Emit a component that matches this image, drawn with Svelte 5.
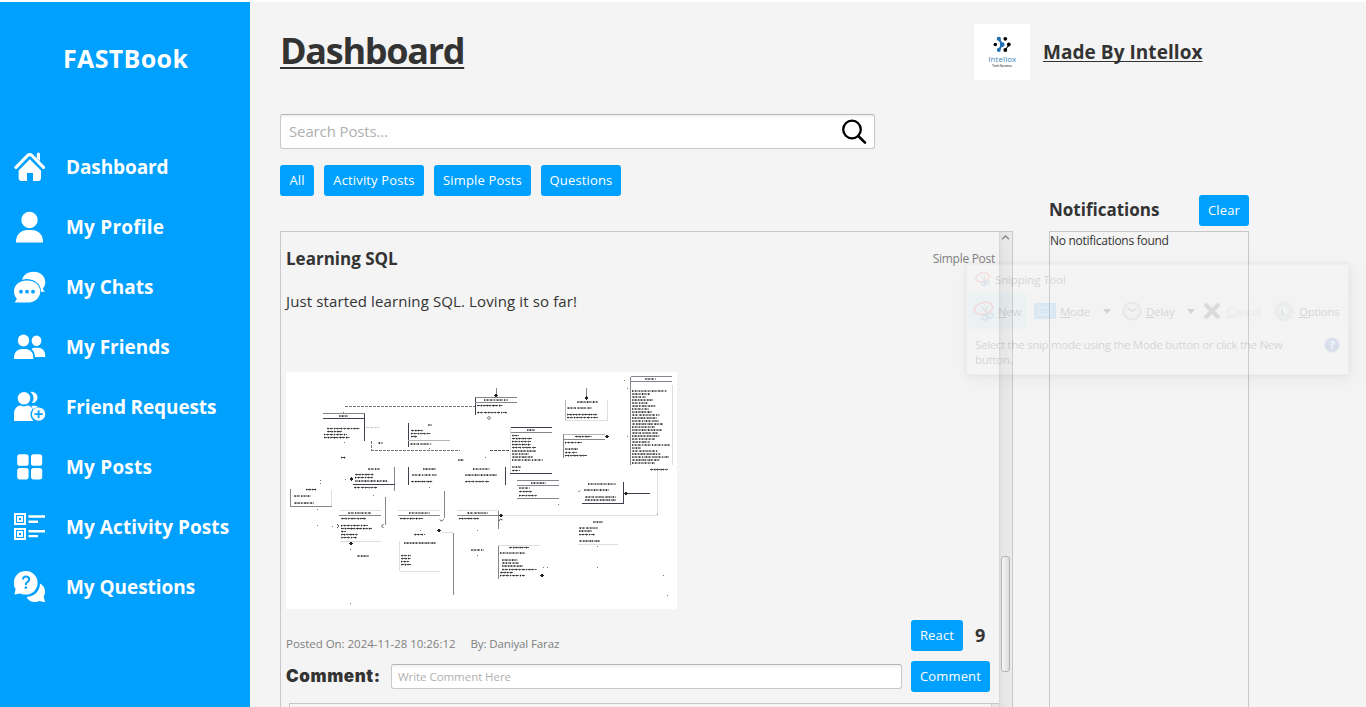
<script>
  const nav = [
    { label: 'Dashboard', icon: 'home', tracking: -0.1 },
    { label: 'My Profile', icon: 'user', tracking: 0.2 },
    { label: 'My Chats', icon: 'chat', tracking: 0 },
    { label: 'My Friends', icon: 'friends', tracking: 0 },
    { label: 'Friend Requests', icon: 'request', tracking: -0.13 },
    { label: 'My Posts', icon: 'grid', tracking: 0.2 },
    { label: 'My Activity Posts', icon: 'list', tracking: 0.07 },
    { label: 'My Questions', icon: 'question', tracking: -0.05 }
  ];

  const filters = [
    { label: 'All', width: 34 },
    { label: 'Activity Posts', width: 100 },
    { label: 'Simple Posts', width: 97 },
    { label: 'Questions', width: 80 }
  ];

  // Diagram strokes: [x1, y1, x2, y2, colour]
  const D = '#3d414e', M = '#85858f', L = '#dedede';
  const lines = [
    [323, 413.5, 365, 413.5, M], [323, 418.5, 365, 418.5, D], [364.5, 414, 364.5, 441, D],
    [408.5, 423, 408.5, 447, D], [408, 440.5, 450, 440.5, '#b5b5b5'],
    [394.5, 467, 394.5, 491, M], [353, 484.5, 395, 484.5, D],
    [408.5, 467, 408.5, 485, D], [505.5, 467, 505.5, 485, D],
    [290.5, 489, 290.5, 506, M], [290, 506.5, 332, 506.5, M], [331.5, 490, 331.5, 506, L],
    [475.5, 397, 475.5, 415, D], [475, 397.5, 517, 397.5, M], [475, 402.5, 517, 402.5, M], [496.5, 388, 496.5, 395, M],
    [510, 427.5, 552, 427.5, D], [510, 432.5, 552, 432.5, M], [510.5, 427, 510.5, 473, L], [510, 473.5, 552, 473.5, D],
    [517, 480.5, 559, 480.5, M], [517, 485.5, 559, 485.5, M], [517, 498.5, 559, 498.5, M],
    [586.5, 388, 586.5, 396, M], [565.5, 400, 565.5, 420, '#b5b5b5'], [607.5, 400, 607.5, 420, L], [565, 420.5, 608, 420.5, L],
    [563, 434.5, 605, 434.5, '#b5b5b5'], [563, 439.5, 605, 439.5, M], [563.5, 434, 563.5, 458, M],
    [631, 376.5, 672, 376.5, M], [631, 381.5, 672, 381.5, M], [630.5, 377, 630.5, 465, M], [672.5, 385, 672.5, 465, L],
    [657.5, 467, 657.5, 515, L], [503, 515.5, 657, 515.5, L],
    [623.5, 482, 623.5, 503, D], [582, 503.5, 624, 503.5, D], [627, 493.5, 650, 493.5, D],
    [385.5, 497, 385.5, 525, M], [444.5, 491, 444.5, 518, M],
    [340, 510.5, 381, 510.5, L], [339, 515.5, 381, 515.5, M], [340, 541.5, 381, 541.5, L],
    [398, 510.5, 440, 510.5, L], [398, 515.5, 440, 515.5, M],
    [457, 510.5, 499, 510.5, L], [457, 515.5, 499, 515.5, M], [498.5, 511, 498.5, 529, M],
    [442, 532.5, 453, 532.5, L], [453.5, 533, 453.5, 595, M],
    [399.5, 541, 399.5, 571, L], [400, 571.5, 440, 571.5, L],
    [498, 545.5, 540, 545.5, L], [498.5, 546, 498.5, 579, M],
    [578, 544.5, 618, 544.5, L]
  ];

  const dashed = [
    [345, 406.5, 475, 406.5, '#777'], [366, 427.5, 380, 427.5, '#ccc'],
    [371.5, 441, 371.5, 450, '#777'], [371, 450.5, 460, 450.5, '#777'], [490, 450.5, 510, 450.5, '#555']
  ];

  // Rows of small print: [x1, x2, y]
  const rows = [
    [339, 348, 416], [327, 360, 428.5], [327, 342, 431.5], [324, 347, 434.5], [324, 350, 437.5], [378, 383, 443],
    [341, 346, 457.5], [428, 432, 425], [411, 423, 430.5], [411, 431, 433.5], [411, 417, 436.5], [410, 432, 444],
    [458, 464, 460], [368, 380, 469], [355, 374, 474.5], [355, 373, 477.5], [355, 388, 481], [354, 378, 487.5],
    [423, 436, 469], [412, 437, 475], [411, 433, 481.5], [473, 490, 469], [465, 497, 475], [465, 489, 481.5],
    [306, 317, 489.5], [294, 311, 496], [294, 314, 503],
    [484, 508, 400], [477, 503, 405.5], [477, 507, 412.5],
    [527, 535, 430], [512, 519, 435.5], [512, 532, 438.5], [512, 531, 441.5], [512, 531, 444.5], [512, 536, 447.5],
    [512, 536, 451], [512, 529, 454], [512, 533, 457], [512, 543, 460], [512, 521, 467], [512, 520, 470.5],
    [531, 546, 483], [519, 530, 488], [519, 532, 491.5], [519, 537, 495.5],
    [577, 598, 402], [567, 592, 408], [567, 597, 414.5], [567, 598, 417.5],
    [575, 592, 436.5], [565, 582, 442.5], [565, 578, 449], [565, 577, 452.5], [565, 587, 455.5],
    [645, 656, 379], [650, 668, 469.5],
    [588, 616, 484], [584, 609, 490], [585, 616, 497], [585, 616, 500],
    [348, 372, 513], [341, 366, 518.5], [341, 368, 525.5], [341, 372, 528.5], [341, 346, 531.5], [341, 358, 534.5], [341, 357, 537.5],
    [357, 369, 556], [409, 430, 513], [400, 423, 518.5], [414, 425, 534.5], [404, 436, 543],
    [401, 411, 555.5], [401, 411, 558.5], [401, 409, 561.5], [401, 411, 564.5],
    [467, 488, 513], [459, 479, 518.5], [471, 484, 550],
    [509, 529, 547.5], [500, 525, 553], [502, 518, 560], [502, 519, 563], [502, 523, 566], [502, 537, 569.5], [500, 513, 572.5], [500, 525, 575.5],
    [593, 603, 522], [579, 598, 528], [579, 592, 531], [579, 595, 534.5], [579, 600, 541]
  ];
  const longBox = [667, 650, 646, 654, 648, 656, 649, 652, 660, 657, 659, 663, 656, 662, 658, 660, 655, 650, 670, 641, 658, 661, 669, 660, 655];
  longBox.forEach((x, i) => rows.push([632, x, 391 + i * 3]));

  const dashes = ['3 .6 2 .5 4 .8', '2 .5 3.4 .9 1.4 .4', '4 .6 1.5 .7 2.2 .5', '1.6 .6 2.8 .4 3.5 1'];
  const diamonds = [[496, 395.5], [586.5, 398], [606.5, 436.5], [625.5, 493.5], [350.5, 543.5], [438.5, 530.5], [500.5, 515.5], [542.3, 575.5], [351.5, 479]];
  const dots = [[343, 412], [344, 442], [429, 448], [320, 480], [320, 483], [345, 479], [317, 509], [317, 525], [332, 526], [350, 549], [373, 495], [429, 487], [477, 530], [477, 555], [624, 380], [627, 388], [627, 436], [657, 514], [543, 567], [547, 567], [597, 567], [597, 546], [663, 575], [667, 595], [350, 603], [558, 504], [485, 457], [420, 530]];
</script>

<div class="window">
  <aside>
    <div class="brand">FASTBook</div>
    <nav>
      {#each nav as item}
        <a class="item" href="#{item.icon}">
          <svg width="32" height="32" viewBox="0 0 32 32" fill="#fff">
            {#if item.icon === 'home'}
              <path d="M2 16.3 13.6 4.5a3 3 0 0 1 4.3 0L29.5 16.3" fill="none" stroke="#fff" stroke-width="3.2" stroke-linecap="round" />
              <path d="M22.800 3.200a1.600 1.600 0 0 1 3.200 0V10L22.800 7z" />
              <path d="M15.8 8.3 27 19.6V27a3 3 0 0 1-3 3h-5v-8h-6v8H7.600a3 3 0 0 1-3-3v-7.400z" />
            {:else if item.icon === 'user'}
              <circle cx="15.500" cy="9" r="8.200" />
              <path d="M2 31.500v-2.500A11 10.500 0 0 1 13 19h5a11 10.500 0 0 1 11 10v2.500z" />
            {:else if item.icon === 'chat'}
              <path d="M8 8.800C9.500 3.500 14 .700 19.500.700 26.500.700 31.300 5 31.300 11c0 3.200-1.300 5.400-2.700 6.700l2.300 3h-4.100A14 11.500 0 0 0 8 8.800z" />
              <path fill-rule="evenodd" d="M13 9.600c7.600 0 13.200 4.400 13.200 10.800S21 31.500 13.500 31.500H.700l2.200-3.700C1.200 26 0 23.500 0 20.500 0 14 5.600 9.600 13 9.600zM7 18.800a1.900 1.900 0 1 0 0 3.800 1.900 1.900 0 0 0 0-3.800zm6 0a1.900 1.900 0 1 0 0 3.800 1.900 1.900 0 0 0 0-3.800zm6 0a1.900 1.900 0 1 0 0 3.800 1.900 1.900 0 0 0 0-3.800z" />
            {:else if item.icon === 'friends'}
              <ellipse cx="9.500" cy="9.600" rx="5.700" ry="6" />
              <ellipse cx="22.500" cy="9.700" rx="4.900" ry="5.200" />
              <path d="M0 28v-1.500C0 21.500 3.500 18 8 18h3.500c4.500 0 7.800 3.500 7.800 8.500V28z" />
              <path d="M17.500 18c1-.7 2.300-1.200 3.700-1.200h3c4 0 7 3.200 7 7.200v2H21c0-3.200-1.300-6.300-3.500-8z" />
            {:else if item.icon === 'request'}
              <circle cx="10" cy="7.200" r="6.300" />
              <path d="M16.500.900c4-.4 7 2.300 7 5.600 0 3.200-2.600 5.600-5.800 5.600 1.200-1.400 1.800-3 1.800-5 0-2.500-1.200-4.700-3-6.200z" />
              <path d="M17.500 14.800h2.800c1.600 0 2.900.5 4 1.400-2.400.2-4.200 1.200-5.400 2.400z" />
              <path d="M0 30v-7c0-4.700 2.800-8.400 6.500-8.400 1 .5 2.100.8 3.500.8s2.600-.3 3.500-.8c2.300 0 3.900 1.400 5 3.400a8.600 8.600 0 0 0 1 12z" />
              <path fill-rule="evenodd" d="M24.600 16.400a6.700 6.700 0 1 1 0 13.400 6.700 6.700 0 0 1 0-13.400zm-.9 2.800v3h-3.200v1.800h3.200v3.200h1.800v-3.200h3.200v-1.800h-3.200v-3z" />
            {:else if item.icon === 'grid'}
              <rect x="3.200" y="3.200" width="11.400" height="11.600" rx="2.600" />
              <rect x="17" y="3.200" width="11.200" height="11.600" rx="2.600" />
              <rect x="3.200" y="17" width="11.400" height="11.400" rx="2.600" />
              <rect x="17" y="17" width="11.200" height="11.400" rx="2.600" />
            {:else if item.icon === 'list'}
              <path fill-rule="evenodd" d="M0 2h12v12H0zM2 4v8h8V4zM0 17h12v12H0zM2 19v8h8v-8z" />
              <path fill-rule="evenodd" d="M3 5h6v6H3zM5 7v2h2V7zM3 20h6v6H3zM5 22v2h2v-2z" />
              <path d="M14.500 4.300H31v2.400H14.500zM14.500 9.600H24V12h-9.500zM14.500 19H31v2.400H14.500zM14.500 24H24v2.200h-9.500z" />
            {:else}
              <path fill-rule="evenodd" d="M11.800 0a11.800 11.800 0 0 1 0 23.600c-2 0-3.800-.4-5.400-1.200L.500 23.500l1.100-5.400A11.800 11.800 0 0 1 11.800 0zM8 8.500h2c.1-1.300.9-2 2-2s2 .7 2 1.700c0 1.200-.8 1.700-1.700 2.500-1 .8-1.500 1.700-1.500 3.300h2c0-1 .3-1.500 1.300-2.300 1.200-1 2-1.800 2-3.500 0-2.200-1.700-3.600-4-3.600S8 6 8 8.500zm2.700 7v2.300H13v-2.300z" />
              <path d="M26 12.500c3 1.500 5 4.500 5 8.200 0 1.900-.5 3.400-1.300 4.800l1.300 5.700-5.600-1.200c-1.500.8-3 1.100-4.700 1.100-3.700 0-6.700-1.900-8.100-5.200C20.500 25.600 26 20 26 12.500z" />
            {/if}
          </svg>
          <span style:letter-spacing="{item.tracking}px">{item.label}</span>
        </a>
      {/each}
    </nav>
  </aside>

  <main>
    <header>
      <h1><span>Dashboard</span></h1>
      <div class="maker">
        <svg class="logo" width="56" height="56" viewBox="0 0 56 56">
          <rect width="56" height="56" fill="#fff" />
          <g stroke="#1f6fb5" fill="#1f6fb5" stroke-width="1.300">
            <path d="M25 15l3 5.500L25 26" fill="none" stroke-width="2" />
            <circle cx="24.800" cy="14.800" r="1.500" /><circle cx="28.300" cy="20.600" r="1.700" /><circle cx="24.800" cy="26" r="1.300" />
          </g>
          <path d="M31 26l4-5" stroke="#000" stroke-width="1.200" />
          <circle cx="31.300" cy="14.800" r="1.900" /><circle cx="34.800" cy="20.500" r="1.900" /><circle cx="31.300" cy="26" r="1.900" /><circle cx="21.300" cy="20.500" r="1.800" />
          <text x="14.300" y="38.200" font-size="8" textLength="28" fill="#4285bd">Intellox</text>
          <text x="18" y="43.400" font-size="3.800" textLength="20" fill="#222">Tech Services</text>
        </svg>
        <h2>Made By Intellox</h2>
      </div>
    </header>

    <div class="columns">
      <section class="posts">
        <div class="search">
          <span>Search Posts...</span>
          <svg width="26" height="26" viewBox="0 0 26 26" fill="none" stroke="#000">
            <circle cx="11" cy="10.500" r="8.800" stroke-width="2.300" />
            <path d="M17.300 17 24 23.700" stroke-width="2.600" stroke-linecap="round" />
          </svg>
        </div>
        <div class="filters">
          {#each filters as f}
            <button style:width="{f.width}px">{f.label}</button>
          {/each}
        </div>

        <div class="feed">
          <article>
            <div class="post-head"><h3>Learning SQL</h3><span class="kind">Simple Post</span></div>
            <p>Just started learning SQL. Loving it so far!</p>
            <svg class="diagram" width="391" height="237" viewBox="286 372 391 237" shape-rendering="crispEdges" fill="none">
              <rect x="286" y="372" width="391" height="237" fill="#fff" />
              {#each lines as [x1, y1, x2, y2, c]}
                <line {x1} {y1} {x2} {y2} stroke={c} />
              {/each}
              {#each dashed as [x1, y1, x2, y2, c]}
                <line {x1} {y1} {x2} {y2} stroke={c} stroke-dasharray="3 1" />
              {/each}
              <g stroke="#222" shape-rendering="auto">
                {#each rows as [x1, x2, y], i}
                  <line {x1} y1={y} {x2} y2={y} stroke-width=".8" stroke-dasharray={dashes[i % 4]} />
                  <line x1={x1 + (i % 3) * 0.6} y1={y + 0.2} x2={x2 - 1} y2={y + 0.2} stroke-width="1.700" stroke-dasharray={i % 2 ? '.8 2.300 .6 3' : '.6 2.600 1 1.900'} />
                {/each}
              </g>
              <g fill="#222">
                {#each diamonds as [x, y]}
                  <path d="M{x - 2} {y}l2-2 2 2-2 2z" />
                {/each}
                {#each dots as [x, y]}
                  <rect {x} {y} width="1" height="1" fill="#777" />
                {/each}
              </g>
              <g stroke="#555" shape-rendering="auto">
                <path d="M337 524l1.800 2-1.800 2M383.500 524l-2 2 2 2M440 519.500l1.500 1.800 2-2M578.500 492l1.500-1.500M499 521l1.500-2 2 1" />
                <circle cx="489" cy="418" r="1.400" stroke-width=".7" />
              </g>
            </svg>
            <div class="post-foot">
              <div class="meta"><span class="date">Posted On: 2024-11-28 10:26:12</span><span class="author">By: Daniyal Faraz</span></div>
              <button class="react">React</button>
              <strong>9</strong>
            </div>
            <div class="comment">
              <span class="label">Comment:</span>
              <div class="field">Write Comment Here</div>
              <button>Comment</button>
            </div>
            <div class="replies"><i></i></div>
          </article>
          <div class="scrollbar">
            <svg width="9" height="5" viewBox="0 0 9 5"><path d="M1 4.300 4.500 1 8 4.300" fill="none" stroke="#888" stroke-width="1.300" /></svg>
            <div class="thumb"></div>
          </div>
        </div>
      </section>

      <section class="notifications">
        <div class="note-head"><h3>Notifications</h3><button>Clear</button></div>
        <div class="note-list">No notifications found</div>
      </section>
    </div>
  </main>

  <div class="snip">
    <div class="snip-title">
      <svg width="17" height="15" viewBox="0 0 22 20" fill="none"><ellipse cx="11" cy="7" rx="9" ry="5.500" stroke="#e33" stroke-width="1.600" transform="rotate(-15 11 7)" /><path d="M9 5l6 8M14 5l-1 9" stroke="#777" stroke-width="1.500" /><circle cx="12" cy="16" r="2.300" stroke="#27b" stroke-width="1.600" /><circle cx="17.500" cy="14" r="2.300" stroke="#27b" stroke-width="1.600" /></svg>
      <span>Snipping Tool</span>
    </div>
    <div class="snip-tools">
      <div class="new">
        <svg width="23" height="21" viewBox="0 0 22 20" fill="none"><ellipse cx="11" cy="7" rx="9" ry="5.500" stroke="#e33" stroke-width="1.600" transform="rotate(-15 11 7)" /><path d="M9 5l6 8M14 5l-1 9" stroke="#777" stroke-width="1.500" /><circle cx="12" cy="16" r="2.300" stroke="#27b" stroke-width="1.600" /><circle cx="17.500" cy="14" r="2.300" stroke="#27b" stroke-width="1.600" /></svg>
        <span><u>N</u>ew</span>
      </div>
      <svg class="mode" width="22" height="16" viewBox="0 0 22 16"><rect width="22" height="16" fill="#2a9df0" /><rect x="4.500" y="4.500" width="12" height="7" fill="none" stroke="#fff" stroke-dasharray="1 1" /></svg>
      <span class="t-mode"><u>M</u>ode</span>
      <svg class="caret" width="8" height="5" viewBox="0 0 8 5"><path d="M0 0h8L4 5z" fill="#000" /></svg>
      <svg class="clock" width="20" height="20" viewBox="0 0 20 20"><circle cx="10" cy="10" r="8.500" fill="none" stroke="#999" stroke-width="2" /><path d="M6 7l4 3.500L15 7" fill="none" stroke="#333" stroke-width="1.300" /><circle cx="10" cy="10" r="6" fill="none" stroke="#777" stroke-dasharray="1 2.100" /></svg>
      <span class="t-delay"><u>D</u>elay</span>
      <svg class="caret2" width="8" height="5" viewBox="0 0 8 5"><path d="M0 0h8L4 5z" fill="#000" /></svg>
      <svg class="cross" width="18" height="18" viewBox="0 0 18 18"><path d="M2 2l14 14M16 2 2 16" stroke="#333" stroke-width="4" /></svg>
      <span class="t-cancel"><u>C</u>ancel</span>
      <svg class="gear" width="20" height="22" viewBox="0 0 20 22" fill="none"><circle cx="10" cy="11" r="6.500" stroke="#b4c4ba" stroke-width="4.500" /><circle cx="10" cy="11" r="9.200" stroke="#9cb4a6" stroke-width="1.600" stroke-dasharray="3 2" /><path d="M8 9v5h3" stroke="#27b" stroke-width="1.600" /></svg>
      <span class="t-options"><u>O</u>ptions</span>
    </div>
    <div class="snip-help">
      <span>Select the snip mode using the Mode button or click the New<br />button.</span>
      <svg width="16" height="16" viewBox="0 0 16 16"><circle cx="8" cy="8" r="7.200" fill="#1c56c0" stroke="#888" /><text x="8" y="12" text-anchor="middle" font-size="11" font-weight="700" fill="#fff">?</text></svg>
    </div>
  </div>
</div>

<style>
  :global(body) { background: #fff; overflow: hidden; }
  * { box-sizing: border-box; }
  .window {
    position: relative; display: flex; width: 1366px; height: 707px; padding-top: 2px; overflow: hidden;
    font-family: 'Open Sans', 'Noto Sans', sans-serif; color: #333; white-space: nowrap;
  }
  h1, h2, h3, p { margin: 0; }
  svg { display: block; flex: none; }
  svg text { font-family: 'Open Sans', sans-serif; }

  aside { flex: none; width: 250px; background: #00a0ff; color: #fff; font-weight: 700; }
  .brand { height: 112px; line-height: 112px; padding-left: 63px; font-size: 25px; letter-spacing: .35px; }
  nav { display: flex; flex-direction: column; padding-top: 23px; }
  .item { display: flex; align-items: center; gap: 20px; height: 60px; padding-left: 14px; color: #fff; text-decoration: none; font-size: 19px; }

  main { flex: 1; background: #f4f4f4; padding: 22px 0 0 30px; display: flex; flex-direction: column; }
  header { display: flex; height: 56px; }
  h1 { width: 694px; font-size: 36px; line-height: 54px; letter-spacing: -1.300px; text-decoration: underline; text-decoration-thickness: 2px; text-underline-offset: 3px; text-decoration-skip-ink: none; }
  .maker { display: flex; align-items: center; gap: 13px; }
  h2 { font-size: 19px; line-height: 56px; letter-spacing: .05px; text-decoration: underline; text-decoration-thickness: 1px; text-underline-offset: 2px; text-decoration-skip-ink: none; }

  .columns { flex: 1; display: grid; grid-template-columns: 733px 200px; column-gap: 36px; padding-top: 34px; min-height: 0; }
  .posts { display: flex; flex-direction: column; min-height: 0; }
  .search, .field { background: linear-gradient(#f2f2f2, #fff 4px); border: 1px solid #c8c8c8; border-top-color: #b5b5b5; border-radius: 3px; color: #b0b0b0; }
  .search { display: flex; align-items: center; justify-content: space-between; width: 595px; height: 35px; padding: 0 7px 0 8px; font-size: 15px; letter-spacing: -.13px; }
  .search span { padding-bottom: 2px; }
  .filters { display: flex; gap: 10px; padding: 16px 0 35px; }
  button { height: 31px; padding: 0; border: 0; border-radius: 3px; background: #00a0ff; color: #fff; font: 13px/31px 'Open Sans', sans-serif; letter-spacing: .15px; }

  .feed { flex: 1; display: flex; min-height: 0; border: 1px solid #c8c8c8; border-bottom: 0; overflow: hidden; }
  article { width: 718px; padding-left: 5px; }
  .post-head { display: flex; justify-content: space-between; align-items: center; height: 52px; padding-right: 4px; }
  h3 { font-size: 17px; }
  .kind { font-size: 12px; letter-spacing: -.28px; color: #808080; }
  p { height: 88px; line-height: 35px; font-size: 15px; letter-spacing: .12px; }
  .post-foot { display: flex; align-items: flex-start; padding-top: 11px; height: 52px; }
  .meta { width: 625px; display: flex; gap: 15px; padding-top: 15px; font-size: 11.500px; line-height: 18px; letter-spacing: -.03px; color: #808080; }
  .author { letter-spacing: -.12px; }
  .react { width: 52px; }
  strong { margin-left: 12px; font-size: 18px; line-height: 31px; }
  .comment { display: flex; align-items: center; height: 31px; }
  .label { width: 105px; font: 900 17px/31px Inter, sans-serif; letter-spacing: .6px; }
  .field { width: 511px; height: 25px; line-height: 24px; padding-left: 6px; margin-right: 9px; font-size: 11.500px; letter-spacing: -.05px; }
  .comment button { width: 79px; }
  .replies { height: 20px; margin: 11px 0 0 3px; border: 1px solid #c8c8c8; border-right: 0; display: flex; justify-content: flex-end; }
  .replies i { width: 8px; background: #e6e6e6; border-left: 1px solid #d0d0d0; }
  .scrollbar { width: 13px; display: flex; flex-direction: column; align-items: center; padding-top: 3px; background: linear-gradient(90deg, #d4d4d4, #e4e4e4 2px, #ebebeb); }
  .thumb { width: 9px; height: 116px; margin-top: 316px; border: 1px solid #b4b4b4; border-radius: 3px; background: linear-gradient(90deg, #f6f6f6, #dcdcdc); }

  .notifications { display: flex; flex-direction: column; padding-top: 81px; min-height: 0; }
  .note-head { display: flex; justify-content: space-between; height: 31px; line-height: 30px; margin-bottom: 5px; }
  .note-head button { width: 50px; }
  .note-list { flex: 1; border: 1px solid #c8c8c8; border-bottom: 0; font-size: 12px; line-height: 18px; letter-spacing: -.28px; }

  .snip { position: absolute; left: 966px; top: 264px; width: 383px; height: 111px; border: 1px solid #ccc; background: #f6f6f6; opacity: .13; color: #000; font-size: 11.500px; letter-spacing: -.3px; box-shadow: 2px 4px 14px rgba(0, 0, 0, .35), 0 0 4px #777; }
  .snip-title { display: flex; align-items: center; gap: 4px; height: 28px; padding-left: 7px; }
  .snip-title span { letter-spacing: -.15px; }
  .snip-tools { display: flex; align-items: center; height: 36px; background: #eee; }
  .new { display: flex; align-items: center; width: 60px; height: 36px; padding-left: 5px; gap: 3px; background: #bfe0f8; }
  .mode { margin-left: 7px; }
  .t-mode { width: 42px; margin-left: 4px; }
  .clock { margin-left: 11px; }
  .t-delay { width: 39px; margin-left: 4px; }
  .caret2 { margin-left: 2px; }
  .caret { margin-left: 1px; }
  .cross { margin-left: 8px; }
  .t-cancel { width: 39px; margin-left: 6px; color: #999; }
  .gear { margin: 0 5px 0 8px; }
  .snip-help { display: flex; justify-content: space-between; padding: 8px 8px 0 8px; line-height: 15px; }
  .snip-help svg { margin-top: 0; }
</style>
